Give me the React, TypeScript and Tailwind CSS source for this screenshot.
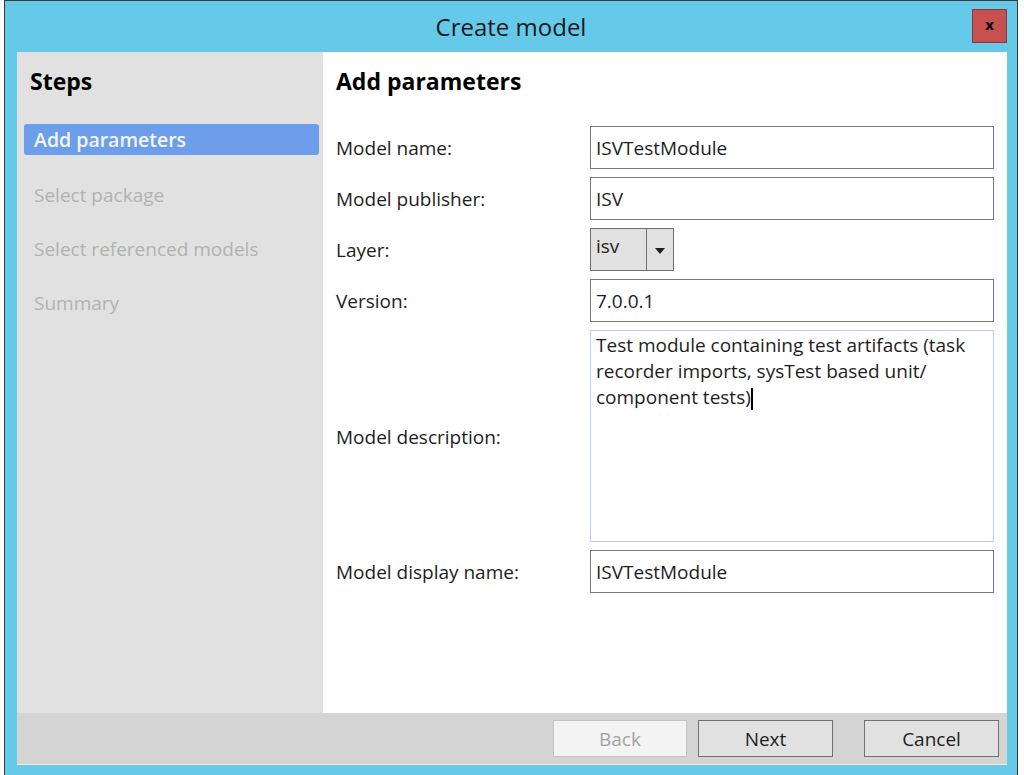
const font = { fontFamily: '"Open Sans", "Noto Sans", sans-serif' }

const steps = ['Select package', 'Select referenced models', 'Summary']

function Field({ label, value }: { label: string; value: string }) {
  return (
    <div className="flex items-center h-[43px]">
      <div className="w-[254px] text-[19px] text-[#1e1e1e] pt-[2px]">{label}</div>
      <div className="flex-1 h-full border border-[#7a7a7a] bg-white flex items-center pl-[5px] pt-[2px] text-[19px] text-[#1e1e1e]">
        {value}
      </div>
    </div>
  )
}

export default function App() {
  return (
    <div className="w-[1024px] h-[775px] bg-white overflow-hidden" style={font}>
      <div className="ml-[4px] w-[1014px] h-[775px] border-l border-t border-r border-[#3a3a3a] bg-[#65c9ea] flex flex-col">
        <div className="h-[51px] grid grid-cols-[1fr_auto_1fr]">
          <div />
          <div className="text-[24px] text-[#1a1a1a] leading-[51px]">Create model</div>
          <div className="flex justify-end items-start pt-[8px] pr-[10px]">
            <div className="w-[35px] h-[34px] bg-[#c75050] border border-[#8a3838] flex items-center justify-center text-[15px] font-bold text-black leading-none pb-[3px]">
              x
            </div>
          </div>
        </div>

        <div className="flex-1 flex flex-col ml-[12px] mr-[10px] mb-[10px]">
          <div className="flex flex-1">
            <div className="w-[306px] bg-[#e1e1e1] pt-[14px]">
              <div className="pl-[13px] text-[23px] font-bold text-black h-[30px] leading-[30px]">Steps</div>
              <div className="mt-[28px] ml-[7px] mr-[4px] h-[31px] rounded-[3px] bg-[#6d9eeb] flex items-center pl-[10px] pt-[1px] text-[19.5px] font-semibold text-[#f4f6fb]">
                Add parameters
              </div>
              <div className="mt-[23px] flex flex-col gap-[23px]">
                {steps.map((s) => (
                  <div key={s} className="pl-[17px] h-[31px] flex items-center pt-[3px] text-[19px] text-[#b2b2b2]">
                    {s}
                  </div>
                ))}
              </div>
            </div>

            <div className="flex-1 bg-white pl-[13px] pr-[13px] pt-[14px]">
              <div className="text-[23px] font-bold text-black h-[30px] leading-[30px]">Add parameters</div>
              <div className="mt-[30px] flex flex-col gap-[8px]">
                <Field label="Model name:" value="ISVTestModule" />
                <Field label="Model publisher:" value="ISV" />
                <div className="flex items-center h-[43px]">
                  <div className="w-[254px] text-[19px] text-[#1e1e1e] pt-[2px]">Layer:</div>
                  <div className="w-[84px] h-full border border-[#707070] bg-[#e1e1e1] flex">
                    <div className="flex-1 pl-[5px] pt-[3px] text-[19px] text-[#1e1e1e] border-r border-[#707070]">isv</div>
                    <div className="w-[26px] flex items-center justify-center pt-[2px]">
                      <svg width="10" height="6" viewBox="0 0 10 6">
                        <path d="M0 0h10L5 6z" fill="#1e1e1e" />
                      </svg>
                    </div>
                  </div>
                </div>
                <Field label="Version:" value="7.0.0.1" />
                <div className="flex items-center h-[212px]">
                  <div className="w-[254px] text-[19px] text-[#1e1e1e] pt-[2px]">Model description:</div>
                  <div className="flex-1 h-full border border-[#b8d2ee] bg-white pl-[5px] pt-[1px] text-[19px] leading-[26px] text-[#1e1e1e]">
                    Test module containing test artifacts (task recorder imports, sysTest based unit/ component tests)
                    <span className="inline-block w-[2px] h-[22px] bg-black align-middle" />
                  </div>
                </div>
                <Field label="Model display name:" value="ISVTestModule" />
              </div>
            </div>
          </div>

          <div className="h-[52px] bg-[#d4d4d4] border-b border-[#ececec] flex items-center justify-end pr-[8px] pb-[1px]">
            <div className="w-[134px] h-[37px] border border-[#c2c2c2] bg-[#f4f4f4] flex items-center justify-center pt-[3px] text-[19px] text-[#a2a2a2]">
              Back
            </div>
            <div className="ml-[11px] w-[135px] h-[37px] border border-[#707070] bg-[#e1e1e1] flex items-center justify-center pt-[3px] text-[19px] text-[#1e1e1e]">
              Next
            </div>
            <div className="ml-[31px] w-[135px] h-[37px] border border-[#707070] bg-[#e1e1e1] flex items-center justify-center pt-[3px] text-[19px] text-[#1e1e1e]">
              Cancel
            </div>
          </div>
        </div>
      </div>
    </div>
  )
}
